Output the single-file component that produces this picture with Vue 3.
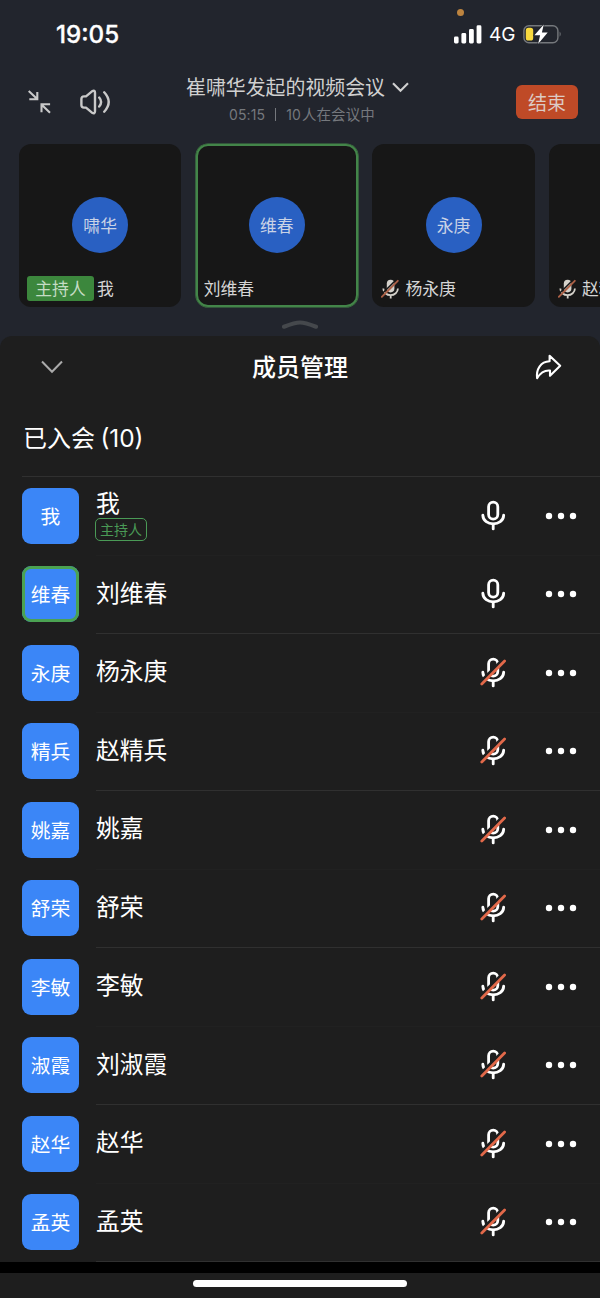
<script setup>
const tiles = [
  { short: '啸华', name: '我', host: true },
  { short: '维春', name: '刘维春', active: true },
  { short: '永庚', name: '杨永庚', muted: true },
  { name: '赵精兵', muted: true },
]
const members = [
  { short: '我', name: '我', host: true },
  { short: '维春', name: '刘维春', active: true },
  { short: '永庚', name: '杨永庚', muted: true },
  { short: '精兵', name: '赵精兵', muted: true },
  { short: '姚嘉', name: '姚嘉', muted: true },
  { short: '舒荣', name: '舒荣', muted: true },
  { short: '李敏', name: '李敏', muted: true },
  { short: '淑霞', name: '刘淑霞', muted: true },
  { short: '赵华', name: '赵华', muted: true },
  { short: '孟英', name: '孟英', muted: true },
]
</script>

<template>
  <div class="screen">
    <header class="status">
      <span class="time">19:05</span>
      <span class="rec-dot"></span>
      <div class="status-right">
        <svg class="signal" width="28" height="19" viewBox="0 0 28 19">
          <rect x="0" y="11.5" width="4.6" height="7" rx="1.4" />
          <rect x="7.4" y="8" width="4.8" height="10.5" rx="1.4" />
          <rect x="15" y="4" width="4.8" height="14.5" rx="1.4" />
          <rect x="22.6" y="0.3" width="4.8" height="18.2" rx="1.4" />
        </svg>
        <span class="net">4G</span>
        <svg class="battery" width="40" height="22" viewBox="0 0 40 22">
          <rect x="0.9" y="2.7" width="34" height="17" rx="5" fill="none" stroke="#75787c" stroke-width="1.4" />
          <path d="M36.6 8.6q2.2 2.6 0 5.2z" fill="#75787c" />
          <rect x="2.8" y="4.8" width="7.4" height="12.8" rx="2.6" fill="#f8d93e" />
          <path d="M20.8 1.6 11.4 12.3h5.7l-2 8.6 9.6-11.3h-5.8z" fill="#fff" stroke="#22252d" stroke-width="1.4" paint-order="stroke" />
        </svg>
      </div>
    </header>

    <nav class="topbar">
      <div class="top-icons">
        <svg width="24" height="26" viewBox="0 0 24 26" fill="none" stroke="#c9c9c9" stroke-width="2.1">
          <path d="M.7 2 9.2 10M1.3 10.2h8V2.9M22 23.8 13.7 15.7M13.5 23.3v-8h8.6" />
        </svg>
        <svg class="speaker" width="31" height="26" viewBox="0 0 31 26" fill="none" stroke="#c9c9c9" stroke-width="2.4" stroke-linecap="round" stroke-linejoin="round">
          <path d="M4 7.4h2L12 2.3q3-1.6 3 1.4v18.6q0 3-3 1.4L6 18.6H4q-2.6 0-2.6-2.5V9.9Q1.4 7.4 4 7.4z" />
          <path d="M19.2 8.6q3.8 4.5 0 8.9M24.2 3.3q9 9.7 0 19.4" />
        </svg>
      </div>
      <div class="meeting">
        <div class="meeting-title">
          <span>崔啸华发起的视频会议</span>
          <svg width="17" height="11" viewBox="0 0 17 11" fill="none" stroke="#d0d0d0" stroke-width="2.1"><path d="M1 1.3 8.5 8.8 16 1.3" /></svg>
        </div>
        <div class="meeting-sub"><span>05:15</span><i></i><span>10<b>人在会议中</b></span></div>
      </div>
      <button class="end">结束</button>
    </nav>

    <section class="tiles">
      <div v-for="t in tiles" :key="t.name" class="tile" :class="{ active: t.active }">
        <div v-if="t.short" class="circle">{{ t.short }}</div>
        <div class="label" :class="{ withmic: t.muted }">
          <span v-if="t.host" class="host-tag">主持人</span>
          <svg v-if="t.muted" width="19" height="20" viewBox="0 0 19 20" fill="none">
            <rect x="5.8" y="0.8" width="7.6" height="12.6" rx="3.8" fill="#d5d2cb" />
            <path d="M2.3 9.5a7.3 6.7 0 0 0 14.6 0M9.7 16v3.4" stroke="#d5d2cb" stroke-width="1.8" />
            <path d="M-.1 16 15.8.2" stroke="#171717" stroke-width="1.5" />
            <path d="M.8 17.8 16.8 1.8" stroke="#ac6046" stroke-width="1.9" stroke-linecap="round" />
          </svg>
          <span>{{ t.name }}</span>
        </div>
      </div>
    </section>
    <div class="grabber">
      <svg width="38" height="11" viewBox="0 0 38 11" fill="none" stroke="#45484c" stroke-width="4.2" stroke-linecap="round" stroke-linejoin="round"><path d="M3 7.7q11-4.2 16-4.2t16 4.2" /></svg>
    </div>

    <main class="panel">
      <div class="panel-head">
        <svg width="22" height="14" viewBox="0 0 22 14" fill="none" stroke="#aaa" stroke-width="2"><path d="M1 1.5 11 11.8 21 1.5" /></svg>
        <h1>成员管理</h1>
        <svg width="27" height="26" viewBox="0 0 27 26" fill="none" stroke="#fff" stroke-width="2.1" stroke-linejoin="round">
          <path d="M14.6 1.8 25.2 11.8 15 21.8V16.5C9.2 16 5.5 18.5 2.1 24.2 1 15.5 5.5 7.5 14.6 7.2z" />
        </svg>
      </div>
      <h2>已入会 <span>(10)</span></h2>
      <ul>
        <li v-for="m in members" :key="m.short">
          <div class="avatar" :class="{ active: m.active }">{{ m.short }}</div>
          <div class="info">
            <div class="name-box" :class="{ hosted: m.host }">
              <span class="name">{{ m.name }}</span>
              <span v-if="m.host" class="badge">主持人</span>
            </div>
            <svg class="mic" width="28" height="32" viewBox="0.6 0.3 28 32" fill="none" stroke="#fff" stroke-width="2.8" stroke-linecap="round">
              <rect x="9.2" y="2.5" width="9.2" height="17" rx="4.6" />
              <path d="M3.4 15.4c.5 11.6 20.4 11.6 20.9 0" />
              <path d="M13.8 24.4v4.8" />
              <template v-if="m.muted">
                <path d="M1.2 25.3 23.2 3.3" stroke="#1e1e1e" stroke-width="3.2" stroke-linecap="butt" />
                <path d="M2.4 27.2 25.2 4.4" stroke="#e2694a" stroke-width="2.8" />
              </template>
            </svg>
            <svg class="more" width="32" height="8" viewBox="0 0 32 8" fill="#fff">
              <circle cx="4" cy="4" r="3.2" /><circle cx="16" cy="4" r="3.2" /><circle cx="28" cy="4" r="3.2" />
            </svg>
          </div>
        </li>
      </ul>
    </main>
    <div class="gap"></div>
    <footer><span></span></footer>
  </div>
</template>

<style>
body { background: #1e1e1e; }
</style>

<style scoped>
* { box-sizing: border-box; }
.screen {
  width: 600px; height: 1298px; overflow: hidden; background: #22252d; color: #fff;
  font-family: "Noto Sans CJK SC", sans-serif; display: flex; flex-direction: column;
}
svg { display: block; flex: none; }
.status { position: relative; height: 68px; flex: none; display: flex; justify-content: space-between; padding: 0 37px 0 56px; align-items: center; }
.time { font: 500 24.2px/24px Inter, sans-serif; letter-spacing: 0; padding-top: 1px; -webkit-text-stroke: 0.3px #fff; }
.rec-dot { position: absolute; left: 457px; top: 9px; width: 7px; height: 7px; border-radius: 50%; background: #bd843f; }
.status-right { display: flex; align-items: center; }
.signal { fill: #fff; }
.net { font: 400 19px/24px Inter, sans-serif; width: 34px; margin-left: 7px; padding-top: 1px; }
.battery { overflow: visible; }
.topbar { height: 76px; flex: none; display: grid; grid-template-columns: 150px 1fr 150px; }
.top-icons { display: flex; align-items: center; padding: 0 0 8px 28px; height: 76px; }
.speaker { margin-left: 28px; }
.meeting { text-align: center; color: #d0d0d0; }
.meeting-title { display: flex; align-items: center; justify-content: center; gap: 7px; font-size: 19.9px; line-height: 24px; margin: 7px 0 0 -5px; white-space: nowrap; }
.meeting-sub { display: flex; align-items: center; justify-content: center; font: 400 14px/20px Inter, sans-serif; color: #75787d; margin-top: 5px; letter-spacing: 0.1px; padding-left: 4px; }
.meeting-sub b { font: 400 14.5px/20px "Noto Sans CJK SC", sans-serif; margin-left: 1px; }
.meeting-sub i { width: 1px; height: 13px; background: #75787d; margin: 0 10px; }
.end { justify-self: end; margin: 17px 22px 0 0; width: 62px; height: 34px; padding: 0 0 1px; border: 0; border-radius: 6px; background: #bf4a27; color: #dccbc4; font: 400 19px/32px "Noto Sans CJK SC", sans-serif; }
.tiles { display: flex; gap: 14.4px; padding-left: 19px; height: 163px; flex: none; }
.tile { width: 162.3px; height: 162.5px; flex: none; background: #171717; border-radius: 12px; position: relative; display: flex; align-items: center; justify-content: center; }
.tile.active { box-shadow: inset 0 0 0 2px #438549, 0 0 0 0.6px #438549; }
.circle { width: 56px; height: 56px; border-radius: 50%; background: #2960c2; color: #c9d3e6; font-size: 16.8px; line-height: 56px; text-align: center; }
.label { position: absolute; left: 8px; bottom: 5.5px; height: 25px; display: flex; align-items: center; font-size: 16.8px; line-height: 25px; color: #d5d5d5; white-space: nowrap; }
.label.withmic { gap: 5px; left: 9px; }
.host-tag { background: #3c873d; color: #c5dcc5; border-radius: 3px; width: 67px; text-align: center; margin-right: 3px; }
.grabber { height: 29px; flex: none; display: flex; justify-content: center; padding-top: 12px; }
.panel { height: 926px; flex: none; background: #1e1e1e; border-radius: 12px 12px 0 0; }
.panel-head { height: 62px; display: grid; grid-template-columns: 100px 1fr 100px; align-items: center; }
.panel-head svg:first-child { margin-left: 41px; }
.panel-head svg:last-child { margin-left: 35px; }
h1 { margin: 0; padding-bottom: 2px; text-align: center; font-size: 24px; font-weight: 500; line-height: 36px; }
h2 { margin: 0; height: 78px; padding: 23px 0 0 23px; font-weight: 400; font-size: 24px; line-height: 32px; white-space: pre; }
h2 span { font: 400 24.4px/32px Inter, sans-serif; }
ul { margin: 0 0 0 22px; padding: 0; list-style: none; border-top: 1px solid #303030; height: 786px; }
li { height: 78.5px; display: flex; align-items: center; }
.avatar { width: 57px; height: 56px; margin-top: -1px; border-radius: 9px; background: #3b86f7; font-size: 19.8px; font-weight: 400; line-height: 55px; text-align: center; }
.avatar.active { box-shadow: inset 0 0 0 3px #4ba252; }
.info { margin-left: 17px; flex: 1; height: 78.5px; display: flex; align-items: center; border-bottom: 1px solid #212121; }
li:nth-child(even) .info { border-bottom-color: #303030; }
.name-box { width: 384px; display: flex; flex-direction: column; align-items: flex-start; padding-bottom: 5px; }
.name-box.hosted { padding-bottom: 0; }
.name { font-size: 23.8px; line-height: 30px; }
.hosted .name { line-height: 28px; margin-top: -2px; }
.badge { border: 1.5px solid #4a9a56; border-radius: 5px; color: #4a9a56; font-size: 14px; line-height: 20px; height: 23px; width: 52px; text-align: center; margin: 2px 0 0 -1px; }
.more { margin-left: 37px; }
.gap { height: 11px; flex: none; background: #000; }
footer { flex: 1; background: #1e1e1e; display: flex; justify-content: center; padding-top: 7px; }
footer span { width: 214px; height: 7px; border-radius: 4px; background: #fff; }
</style>
